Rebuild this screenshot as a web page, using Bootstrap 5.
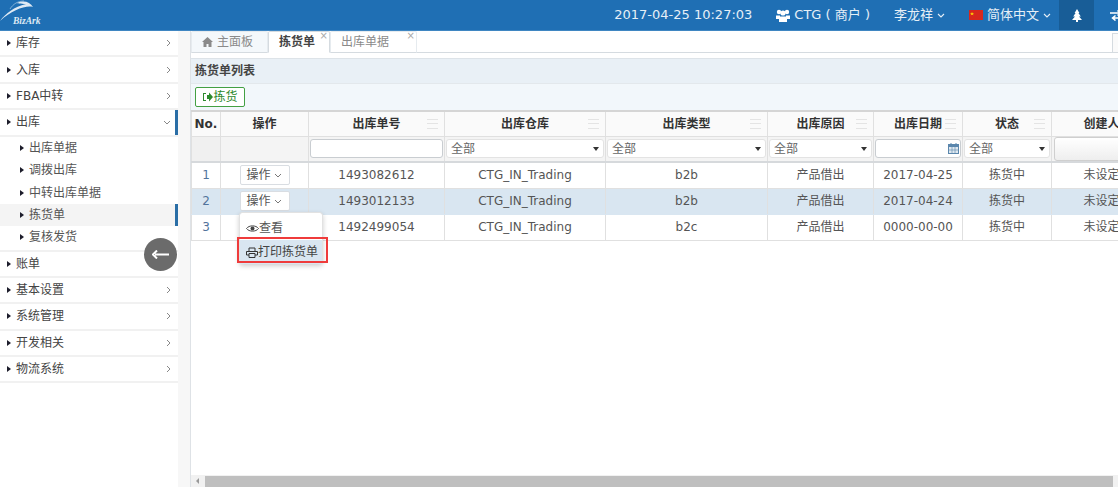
<!DOCTYPE html>
<html lang="zh-CN">

<head>
    <meta charset="UTF-8" />
    <meta name="viewport" content="width=device-width, initial-scale=1.0" />
    <title>拣货单列表</title>

    <link href="https://cdn.jsdelivr.net/npm/bootstrap@5.3.2/dist/css/bootstrap.min.css" rel="stylesheet">

    <style>
        html, body {
            height: 100%;
            overflow: hidden;
        }

        body {
            font-family: "DejaVu Sans", "Noto Sans CJK SC", sans-serif;
            font-size: 12px;
            color: #555;
            background: #fff;
        }

        /* top bar */
        .top-bar {
            height: 31px;
            background: #1f6fb4;
            border-bottom: 1px solid #3f86c2;
            color: #e6eff7;
        }

        .logo-box {
            width: 60px;
            height: 30px;
            position: relative;
        }

        .logo-text {
            position: absolute;
            left: 13px;
            top: 14px;
            font-family: "Liberation Serif", serif;
            font-style: italic;
            font-weight: 700;
            font-size: 9.5px;
            color: #dfeaf4;
        }

        .top-item {
            font-size: 13px;
            white-space: nowrap;
        }

        .top-bell {
            width: 35px;
            height: 30px;
            background: #185d97;
        }

        /* side menu */
        .shell {
            height: 456px;
        }

        .side-col {
            width: 190px;
            flex: none;
            background: #f7f7f7;
            padding-right: 12px;
        }

        .side-list {
            background: #fff;
            height: 100%;
        }

        .side-row {
            height: 26.4px;
            border-bottom: 2px solid #f1f1f1;
            padding: 0 7px;
            color: #444;
            position: relative;
        }

        .sub-list {
            padding-bottom: 1px;
            border-bottom: 2px solid #f1f1f1;
        }

        .sub-row {
            height: 22.4px;
            padding-left: 20px;
            color: #555;
            position: relative;
        }

        .sub-row.current {
            background: #f4f4f4;
        }

        .mark-right::after {
            content: "";
            position: absolute;
            right: 0;
            top: 0;
            bottom: 0;
            width: 3px;
            background: #2a6ea6;
        }

        .tri {
            width: 0;
            height: 0;
            border-top: 3.5px solid transparent;
            border-bottom: 3.5px solid transparent;
            border-left: 4px solid #1d1d2b;
            margin-right: 5px;
        }

        .back-btn {
            position: absolute;
            left: 144px;
            top: 238px;
            width: 33px;
            height: 33px;
            border-radius: 50%;
            background: #6b6b6b;
        }

        /* tabs */
        .main-col {
            min-width: 0;
            flex: 1;
        }

        .tab-strip {
            height: 22px;
            border-bottom: 1px solid #d5dbe0;
            position: relative;
        }

        .tab-cell {
            height: 22px;
            padding: 0 0 0 10px;
            width: 77px;
            color: #8a8a8a;
            background: #f4f8fb;
            border: 1px solid #e6ebef;
            border-bottom: 1px solid #d5dbe0;
            border-radius: 2px 2px 0 0;
            position: relative;
            white-space: nowrap;
        }

        .tab-cell.active-tab {
            background: #fff;
            color: #444;
            font-weight: 700;
            border-color: #d5dbe0;
            border-bottom-color: #fff;
            width: 62px;
        }

        .tab-cell.last-tab {
            width: 87px;
            background: #fff;
        }

        .tab-close {
            position: absolute;
            right: 1px;
            top: -2px;
            font-size: 10px;
            line-height: 12px;
            color: #aaa;
            font-weight: 400;
        }

        .tab-more {
            position: absolute;
            right: -3px;
            top: 2px;
            width: 9px;
            height: 20px;
            border: 1px solid #d5dbe0;
            background: #fafafa;
        }

        /* panel */
        .list-title {
            height: 25px;
            margin-top: 5px;
            background: #e9f0f6;
            border-top: 1px solid #dde3e8;
            font-weight: 700;
            color: #444;
            padding-left: 4px;
        }

        .tool-bar {
            height: 27px;
            background: #f2f7fb;
            border-top: 1px solid #e3e8ec;
            padding-left: 4px;
        }

        .btn-pick {
            --bs-btn-padding-y: 0;
            --bs-btn-padding-x: 6px;
            --bs-btn-font-size: 12px;
            --bs-btn-color: #2d8a2d;
            --bs-btn-border-color: #43a043;
            --bs-btn-bg: #fff;
            --bs-btn-border-radius: 2px;
            height: 20px;
            width: 50px;
            white-space: nowrap;
        }

        /* grid */
        .table-clip {
            overflow: hidden;
            flex: 1;
            position: relative;
        }

        .grid-table {
            table-layout: fixed;
            width: 960px;
            margin: 0;
            font-size: 12px;
            border-collapse: collapse;
            color: #555;
        }

        .grid-table th,
        .grid-table td {
            padding: 0;
            text-align: center;
            vertical-align: middle;
            border: 1px solid #e0e0e0;
            white-space: nowrap;
            background: #fff;
            color: inherit;
            box-shadow: none;
        }

        .grid-table tr.head-row th {
            height: 25px;
            background: #fafafa;
            color: #333;
            font-weight: 700;
            border-top: 2px solid #d5d5d5;
            position: relative;
        }

        .grid-table tr.filter-row th {
            height: 26px;
            background: #f4f4f4;
            border-bottom: 2px solid #d6d9dc;
            font-weight: 400;
            padding: 0 1px;
        }

        .grid-table tr.data-row td {
            height: 26px;
        }

        .grid-table tr.data-row.picked td {
            background: #d9e6f1;
            border-color: #d9e6f1 #e0e0e0;
        }

        .grid-table th.no-col,
        .grid-table tr.filter-row th.no-col {
            background: #f0f0f0;
        }

        .grid-table td.no-col {
            color: #51739b;
        }

        .grip {
            position: absolute;
            right: 6px;
            top: 7px;
            width: 11px;
            height: 10px;
            border-top: 1px solid #e4e4e4;
            border-bottom: 1px solid #e4e4e4;
        }

        .grip::after {
            content: "";
            display: block;
            margin-top: 3px;
            border-top: 1px solid #e4e4e4;
        }

        .filter-input {
            height: 19px;
            width: 100%;
            display: block;
            background: #fff;
            border: 1px solid #c9cdd1;
            border-radius: 3px;
        }

        .filter-select {
            height: 19px;
            background: #fff;
            border: 1px solid #e3e3e3;
            border-radius: 3px;
            padding: 0 4px;
            color: #666;
        }

        .select-caret {
            width: 0;
            height: 0;
            border-left: 3.5px solid transparent;
            border-right: 3.5px solid transparent;
            border-top: 4px solid #333;
        }

        .filter-date {
            height: 19px;
            padding-right: 1px;
        }

        .filter-user {
            height: 24px;
            width: 80px;
            background: linear-gradient(#fff, #eee);
            border: 1px solid #cfcfcf;
            border-radius: 3px;
            margin-left: 1px;
        }

        .btn-action {
            --bs-btn-padding-y: 0;
            --bs-btn-padding-x: 6px;
            --bs-btn-font-size: 12px;
            --bs-btn-color: #555;
            --bs-btn-bg: #fff;
            --bs-btn-border-color: #d9dde2;
            --bs-btn-border-radius: 2px;
            width: 50px;
            height: 20px;
            white-space: nowrap;
        }

        .action-menu {
            display: block;
            position: absolute;
            left: 48px;
            top: 102px;
            width: 84px;
            min-width: 0;
            height: 52px;
            padding: 3px 0;
            font-size: 12px;
            border-radius: 3px;
            border: 1px solid #e2e2e2;
            box-shadow: 0 2px 5px rgba(0, 0, 0, .2);
            z-index: 5;
        }

        .action-menu .dropdown-item {
            padding: 0 3px 0 6px;
            height: 24px;
            color: #555;
            display: flex;
            align-items: center;
            white-space: nowrap;
        }

        .action-menu .dropdown-item.hot {
            background: #d9e6f1;
            color: #444;
        }

        .red-frame {
            position: absolute;
            left: 46px;
            top: 127px;
            width: 91px;
            height: 26px;
            border: 2px solid #ef3b3b;
            z-index: 6;
        }

        /* bottom scrollbar */
        .h-scroll {
            height: 12px;
            background: #f1f1f1;
            flex: none;
        }

        .h-thumb {
            flex: 1;
            margin: 1px 5px 0 0;
            background: #bfbfbf;
        }
    </style>
</head>

<body>

    <header class="top-bar d-flex align-items-center">
        <div class="logo-box">
            <svg width="42" height="24" viewBox="0 0 42 24" class="position-absolute top-0 start-0">
                <path d="M0 21C6 13 14 7 26 4C20 4 17 3 17 3C24 0 30 2 33 7C26 5 12 10 0 21Z" fill="#dfeaf4" />
                <path d="M10 9C13 4 18 1 24 1" fill="none" stroke="#a9c8e2" stroke-width=".7" />
            </svg>
            <span class="logo-text">BizArk</span>
        </div>
        <div class="ms-auto d-flex align-items-center">
            <span class="top-item">2017-04-25 10:27:03</span>
            <span class="top-item d-flex align-items-center ms-4">
                <svg width="14" height="13" viewBox="0 0 14 13" class="me-1" fill="#fff">
                    <circle cx="3" cy="3" r="2.2" /><circle cx="11" cy="3" r="2.2" /><circle cx="7" cy="4" r="2.6" />
                    <path d="M0 6.5h4V10H0zM10 6.5h4V10h-4zM3 7.5h8V13H3z" />
                </svg>
                CTG ( 商户 )
            </span>
            <span class="top-item d-flex align-items-center ms-4">李龙祥
                <svg width="8" height="5" viewBox="0 0 8 5" class="ms-1"><path d="M1 1l3 3 3-3" fill="none" stroke="#e6eff7" stroke-width="1.1" /></svg>
            </span>
            <span class="top-item d-flex align-items-center ms-4">
                <svg width="14" height="10" viewBox="0 0 14 10" class="me-1">
                    <rect width="14" height="10" fill="#d8271c" />
                    <path d="M3 2l.5 1.2H5l-1 .8.4 1.3L3 4.6l-1.2.7.3-1.3-1-.8h1.4z" fill="#fd0" />
                </svg>
                简体中文
                <svg width="8" height="5" viewBox="0 0 8 5" class="ms-1"><path d="M1 1l3 3 3-3" fill="none" stroke="#e6eff7" stroke-width="1.1" /></svg>
            </span>
            <span class="top-bell d-flex align-items-center justify-content-center ms-2">
                <svg width="10" height="13" viewBox="0 0 10 13" fill="#fff"><path d="M5 0l2.4 4H6.4l2.4 3.4H7L10 11H6v2H4v-2H0l3-3.6H1.200l2.400-3.400H2.600z" /></svg>
            </span>
            <span class="d-flex align-items-center ms-3" style="width:8px;overflow:hidden">
                <svg width="13" height="11" viewBox="0 0 13 11" class="flex-none" style="flex:none"><path d="M0 3h10M7.500.5L10.500 3 7.500 5.500M13 8H3M5.500 5.500L2.500 8l3 2.500" fill="none" stroke="#fff" stroke-width="1.500" /></svg>
            </span>
        </div>
    </header>

    <div class="shell d-flex">
        <aside class="side-col">
            <div class="side-list">
                <div class="side-row d-flex align-items-center"><i class="tri"></i>库存<svg class="ms-auto" width="5" height="8" viewBox="0 0 5 8"><path d="M1 1l3 3-3 3" fill="none" stroke="#888" /></svg></div>
                <div class="side-row d-flex align-items-center"><i class="tri"></i>入库<svg class="ms-auto" width="5" height="8" viewBox="0 0 5 8"><path d="M1 1l3 3-3 3" fill="none" stroke="#888" /></svg></div>
                <div class="side-row d-flex align-items-center"><i class="tri"></i>FBA中转<svg class="ms-auto" width="5" height="8" viewBox="0 0 5 8"><path d="M1 1l3 3-3 3" fill="none" stroke="#888" /></svg></div>
                <div class="side-row d-flex align-items-center mark-right"><i class="tri"></i>出库<svg class="ms-auto" width="8" height="5" viewBox="0 0 8 5"><path d="M1 1l3 3 3-3" fill="none" stroke="#888" /></svg></div>
                <div class="sub-list">
                    <div class="sub-row d-flex align-items-center"><i class="tri"></i>出库单据</div>
                    <div class="sub-row d-flex align-items-center"><i class="tri"></i>调拨出库</div>
                    <div class="sub-row d-flex align-items-center"><i class="tri"></i>中转出库单据</div>
                    <div class="sub-row current mark-right d-flex align-items-center"><i class="tri"></i>拣货单</div>
                    <div class="sub-row d-flex align-items-center"><i class="tri"></i>复核发货</div>
                </div>
                <div class="side-row d-flex align-items-center"><i class="tri"></i>账单<svg class="ms-auto" width="5" height="8" viewBox="0 0 5 8"><path d="M1 1l3 3-3 3" fill="none" stroke="#888" /></svg></div>
                <div class="side-row d-flex align-items-center"><i class="tri"></i>基本设置<svg class="ms-auto" width="5" height="8" viewBox="0 0 5 8"><path d="M1 1l3 3-3 3" fill="none" stroke="#888" /></svg></div>
                <div class="side-row d-flex align-items-center"><i class="tri"></i>系统管理<svg class="ms-auto" width="5" height="8" viewBox="0 0 5 8"><path d="M1 1l3 3-3 3" fill="none" stroke="#888" /></svg></div>
                <div class="side-row d-flex align-items-center"><i class="tri"></i>开发相关<svg class="ms-auto" width="5" height="8" viewBox="0 0 5 8"><path d="M1 1l3 3-3 3" fill="none" stroke="#888" /></svg></div>
                <div class="side-row d-flex align-items-center"><i class="tri"></i>物流系统<svg class="ms-auto" width="5" height="8" viewBox="0 0 5 8"><path d="M1 1l3 3-3 3" fill="none" stroke="#888" /></svg></div>
            </div>
        </aside>

        <main class="main-col d-flex flex-column border-start">
            <div class="tab-strip d-flex">
                <div class="tab-cell d-flex align-items-center">
                    <svg width="11" height="10" viewBox="0 0 11 10" class="me-1" fill="#8a8a8a"><path d="M5.500 0L11 5H9.500v5H6.500V7h-2v3H1.500V5H0z" /></svg>主面板
                </div>
                <div class="tab-cell active-tab d-flex align-items-center">拣货单<span class="tab-close">×</span></div>
                <div class="tab-cell last-tab d-flex align-items-center">出库单据<span class="tab-close">×</span></div>
                <div class="tab-more"></div>
            </div>

            <div class="list-title d-flex align-items-center">拣货单列表</div>
            <div class="tool-bar d-flex align-items-center">
                <button type="button" class="btn btn-pick d-flex align-items-center justify-content-center">
                    <svg width="11" height="10" viewBox="0 0 11 10" fill="#2d8a2d"><path d="M4 1H1v8h3V8H2V2h2zM5 3h2V.5L11 5 7 9.500V7H5z" /></svg>拣货
                </button>
            </div>

            <div class="table-clip">
                <table class="table grid-table">
                    <colgroup>
                        <col style="width:29px"><col style="width:88px"><col style="width:136px"><col style="width:161px"><col style="width:162px"><col style="width:106px"><col style="width:89px"><col style="width:89px"><col style="width:100px">
                    </colgroup>
                    <thead>
                        <tr class="head-row">
                            <th class="no-col">No.</th>
                            <th>操作</th>
                            <th>出库单号<i class="grip"></i></th>
                            <th>出库仓库<i class="grip"></i></th>
                            <th>出库类型<i class="grip"></i></th>
                            <th>出库原因<i class="grip"></i></th>
                            <th>出库日期<i class="grip"></i></th>
                            <th>状态<i class="grip"></i></th>
                            <th>创建人</th>
                        </tr>
                        <tr class="filter-row">
                            <th class="no-col"></th>
                            <th></th>
                            <th><span class="filter-input"></span></th>
                            <th><div class="filter-select d-flex align-items-center justify-content-between">全部<i class="select-caret"></i></div></th>
                            <th><div class="filter-select d-flex align-items-center justify-content-between">全部<i class="select-caret"></i></div></th>
                            <th><div class="filter-select d-flex align-items-center justify-content-between">全部<i class="select-caret"></i></div></th>
                            <th>
                                <div class="filter-input filter-date d-flex align-items-center justify-content-end">
                                    <svg width="11" height="11" viewBox="0 0 11 11"><rect y="1" width="11" height="10" fill="#5b87ad" /><rect x="1" y="4" width="9" height="6" fill="#dfe8f0" /><path d="M3 0v2M8 0v2" stroke="#5b87ad" /><path d="M4 4v6M7 4v6M1 7h9" stroke="#5b87ad" stroke-width=".6" /></svg>
                                </div>
                            </th>
                            <th><div class="filter-select d-flex align-items-center justify-content-between">全部<i class="select-caret"></i></div></th>
                            <th class="text-start"><div class="filter-user"></div></th>
                        </tr>
                    </thead>
                    <tbody>
                        <tr class="data-row">
                            <td class="no-col">1</td>
                            <td><button type="button" class="btn btn-action">操作 <svg width="8" height="5" viewBox="0 0 8 5"><path d="M1 1l3 3 3-3" fill="none" stroke="#777" /></svg></button></td>
                            <td>1493082612</td><td>CTG_IN_Trading</td><td>b2b</td><td>产品借出</td><td>2017-04-25</td><td>拣货中</td><td>未设定</td>
                        </tr>
                        <tr class="data-row picked">
                            <td class="no-col">2</td>
                            <td><button type="button" class="btn btn-action">操作 <svg width="8" height="5" viewBox="0 0 8 5"><path d="M1 1l3 3 3-3" fill="none" stroke="#777" /></svg></button></td>
                            <td>1493012133</td><td>CTG_IN_Trading</td><td>b2b</td><td>产品借出</td><td>2017-04-24</td><td>拣货中</td><td>未设定</td>
                        </tr>
                        <tr class="data-row">
                            <td class="no-col">3</td>
                            <td></td>
                            <td>1492499054</td><td>CTG_IN_Trading</td><td>b2c</td><td>产品借出</td><td>0000-00-00</td><td>拣货中</td><td>未设定</td>
                        </tr>
                    </tbody>
                </table>

                <div class="dropdown-menu action-menu">
                    <a class="dropdown-item" href="#">
                        <svg width="13" height="9" viewBox="0 0 13 9"><path d="M.5 4.500C3 1 10 1 12.500 4.500 10 8 3 8 .5 4.500Z" fill="none" stroke="#444" /><circle cx="6.500" cy="4.500" r="2" fill="#444" /></svg>查看
                    </a>
                    <a class="dropdown-item hot" href="#">
                        <svg width="12" height="11" viewBox="0 0 12 11"><path d="M3 4V1h6v3M3 8H.5V4.500h11V8H9" fill="none" stroke="#333" /><path d="M3 6.500h6v4H3z" fill="none" stroke="#333" /></svg>打印拣货单
                    </a>
                </div>
                <div class="red-frame"></div>
            </div>

            <div class="h-scroll d-flex align-items-center">
                <svg width="14" height="8" viewBox="0 0 14 8"><path d="M8 1v6L5 4z" fill="#999" /></svg>
                <div class="h-thumb align-self-stretch"></div>
                <div style="width:0"></div>
            </div>
        </main>
    </div>

    <div class="back-btn d-flex align-items-center justify-content-center">
        <svg width="17" height="9" viewBox="0 0 17 9"><path d="M17 4.500H3M5 .5L1 4.500l4 4" fill="none" stroke="#fff" stroke-width="2" /></svg>
    </div>

    <script src="https://cdn.jsdelivr.net/npm/bootstrap@5.3.2/dist/js/bootstrap.bundle.min.js"></script>
</body>

</html>
